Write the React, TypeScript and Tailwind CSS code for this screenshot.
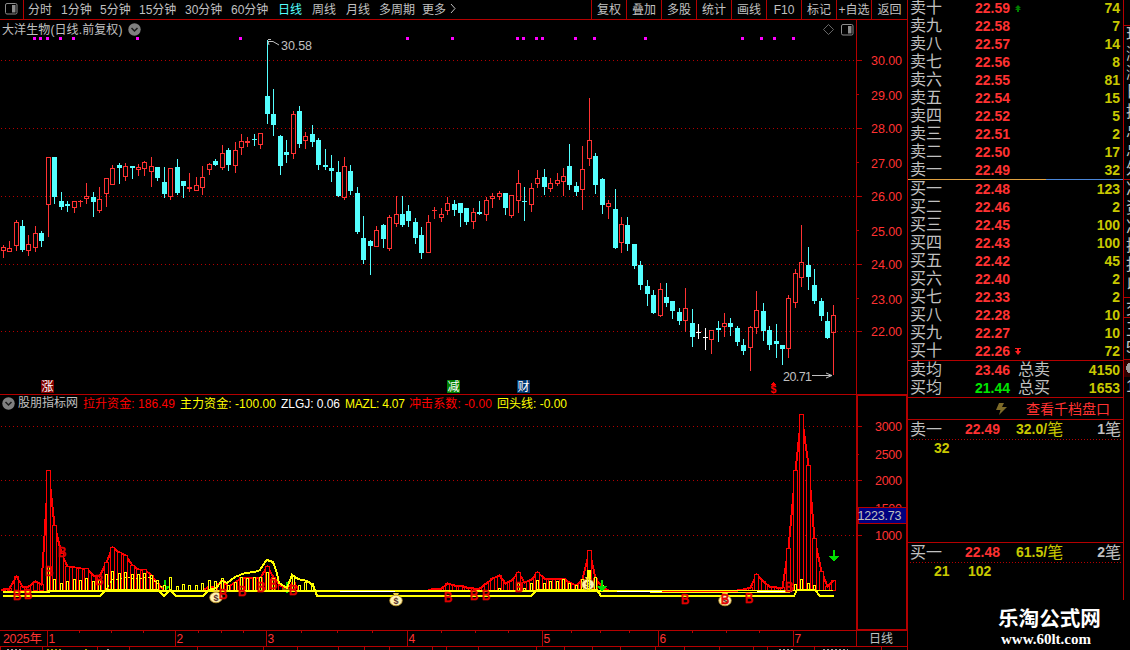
import { Fragment } from "react";

// [kind, high, body top, body bottom, low] in chart pixels
type Candle = [string, number, number, number, number];

const candles: Candle[] = [
  ["r", 245, 247, 250, 257], ["r", 241, 248, 251, 251], ["r", 220, 222, 245, 250], ["c", 220, 226, 250, 251],
  ["r", 235, 244, 250, 255], ["r", 226, 233, 247, 251], ["c", 231, 233, 241, 246], ["r", 157, 157, 204, 236],
  ["c", 157, 157, 197, 203], ["c", 192, 201, 207, 209], ["c", 201, 204, 206, 211], ["r", 201, 201, 207, 212],
  ["r", 200, 201, 201, 206], ["r", 183, 196, 198, 203], ["c", 192, 197, 202, 216], ["r", 187, 199, 210, 212],
  ["r", 178, 178, 193, 206], ["r", 165, 168, 184, 184], ["c", 163, 165, 168, 183], ["r", 163, 166, 176, 180],
  ["c", 166, 166, 168, 178], ["r", 164, 167, 169, 175], ["r", 161, 162, 168, 175], ["r", 157, 166, 171, 186],
  ["c", 167, 167, 178, 180], ["c", 167, 182, 194, 197], ["r", 168, 168, 196, 199], ["c", 159, 167, 193, 194],
  ["c", 181, 181, 186, 197], ["r", 173, 187, 188, 191], ["r", 177, 185, 190, 190], ["r", 166, 177, 187, 194],
  ["r", 163, 164, 169, 174], ["c", 159, 161, 165, 165], ["r", 145, 153, 167, 169], ["c", 148, 150, 165, 170],
  ["r", 142, 150, 165, 172], ["r", 134, 141, 147, 154], ["r", 137, 141, 142, 146], ["c", 134, 139, 139, 145],
  ["r", 133, 133, 144, 148], ["c", 40, 96, 114, 123], ["c", 89, 114, 125, 135], ["c", 135, 136, 166, 174],
  ["c", 140, 152, 155, 162], ["r", 111, 114, 153, 158], ["c", 106, 111, 144, 147], ["r", 132, 136, 140, 148],
  ["c", 125, 134, 142, 146], ["c", 138, 140, 165, 169], ["c", 149, 165, 167, 169], ["c", 155, 168, 171, 181],
  ["c", 161, 172, 196, 196], ["r", 157, 166, 197, 199], ["c", 165, 171, 191, 194], ["c", 187, 193, 232, 233],
  ["c", 216, 238, 260, 263], ["c", 240, 241, 246, 274], ["r", 226, 230, 246, 246], ["c", 224, 225, 239, 247],
  ["r", 215, 217, 248, 250], ["r", 196, 214, 223, 226], ["c", 196, 214, 225, 226], ["c", 205, 211, 221, 226],
  ["c", 218, 222, 238, 243], ["c", 227, 235, 253, 258], ["r", 215, 222, 252, 252], ["r", 207, 210, 210, 218],
  ["r", 208, 214, 217, 221], ["r", 197, 203, 210, 214], ["c", 200, 204, 210, 215], ["c", 203, 203, 213, 226],
  ["c", 208, 208, 222, 224], ["r", 208, 212, 221, 228], ["c", 201, 212, 214, 214], ["r", 197, 200, 214, 220],
  ["r", 193, 196, 198, 207], ["r", 191, 193, 196, 199], ["c", 193, 193, 208, 214], ["r", 195, 195, 215, 217],
  ["r", 170, 183, 200, 212], ["c", 187, 201, 201, 220], ["r", 183, 188, 204, 211], ["r", 170, 178, 183, 187],
  ["c", 169, 177, 187, 194], ["r", 178, 183, 188, 191], ["r", 173, 180, 183, 185], ["r", 168, 176, 181, 195],
  ["c", 144, 166, 185, 189], ["c", 182, 186, 192, 195], ["r", 146, 169, 189, 209], ["r", 98, 140, 158, 165],
  ["c", 153, 156, 185, 193], ["c", 178, 179, 205, 213], ["r", 200, 203, 206, 218], ["c", 189, 209, 248, 248],
  ["r", 217, 224, 242, 252], ["c", 217, 225, 244, 250], ["c", 244, 244, 266, 268], ["c", 261, 265, 285, 289],
  ["c", 280, 286, 294, 305], ["c", 290, 295, 313, 313], ["r", 283, 289, 315, 316], ["c", 283, 297, 303, 306],
  ["c", 301, 301, 311, 318], ["c", 308, 312, 321, 324], ["r", 288, 308, 320, 331], ["c", 309, 323, 337, 346],
  ["w", 324, 332, 332, 338], ["w", 328, 337, 337, 349], ["r", 330, 330, 339, 353], ["c", 321, 328, 330, 341],
  ["r", 313, 323, 326, 336], ["c", 318, 323, 327, 335], ["c", 326, 328, 342, 345], ["c", 339, 345, 351, 354],
  ["r", 326, 327, 347, 370], ["r", 291, 310, 327, 333], ["c", 303, 311, 331, 340], ["c", 326, 330, 345, 349],
  ["c", 324, 341, 344, 357], ["c", 345, 345, 349, 364], ["r", 295, 298, 348, 357], ["r", 269, 273, 302, 307],
  ["r", 225, 262, 277, 286], ["c", 247, 265, 277, 289], ["c", 269, 285, 301, 303], ["c", 298, 301, 316, 320],
  ["c", 312, 321, 338, 338], ["r", 305, 315, 332, 374],
];

const kindColors: Record<string, string> = { r: "#ff3232", c: "#54ffff", w: "#ffffff" };

const barX = (i: number) => Math.floor(3.2 + 6.44 * i);

// top of the red fund bars, by candle index
const redTops: Record<number, number> = {
  0: 589, 1: 588, 2: 576, 3: 586, 4: 586, 5: 581, 6: 584, 7: 470, 8: 525, 9: 553, 10: 566, 11: 567, 12: 568,
  13: 568, 14: 575, 15: 576, 16: 562, 17: 547, 18: 552, 19: 555, 20: 565, 21: 569, 22: 569, 23: 575, 24: 583,
  32: 586, 33: 586, 34: 580, 35: 586, 36: 582, 37: 577, 38: 577, 39: 577, 40: 577, 41: 566, 42: 577, 43: 585,
  44: 588, 45: 582, 67: 588, 68: 588, 69: 583, 70: 585, 71: 585, 72: 587, 73: 588, 74: 588, 75: 583, 76: 578,
  77: 575, 78: 583, 79: 580, 80: 572, 81: 582, 82: 579, 83: 572, 84: 578, 85: 578, 86: 578, 87: 578, 88: 582,
  89: 585, 90: 579, 91: 550, 92: 578, 93: 587, 115: 589, 116: 587, 117: 574, 118: 581, 119: 586, 120: 587,
  121: 587, 122: 548, 123: 470, 124: 414, 125: 465, 126: 538, 127: 571, 128: 586, 129: 580,
};

const yellowTops: Record<number, number> = {
  7: 566, 8: 579, 9: 583, 10: 581, 11: 579, 12: 580, 13: 578, 14: 581, 15: 580, 16: 574, 17: 571, 18: 573,
  19: 572, 20: 574, 21: 574, 22: 573, 23: 575, 24: 580, 25: 585, 26: 577, 27: 586, 28: 584, 29: 585, 30: 585,
  31: 583, 32: 580, 33: 581, 34: 578, 35: 585, 36: 582, 37: 577, 38: 578, 39: 577, 40: 577, 41: 572, 42: 578,
  45: 575, 46: 585, 47: 582, 48: 583, 77: 588, 80: 583, 81: 588, 82: 583, 83: 580, 84: 583, 85: 581, 86: 581,
  87: 579, 88: 583, 89: 585, 90: 579, 91: 570, 92: 577, 93: 585, 123: 584, 124: 579, 125: 583, 126: 585,
};

const redLine = candles.map((_, i) => `${barX(i) + 0.5},${(redTops[i] ?? 590) + 0.5}`).join(" ");

const dots = [33, 39, 46, 59, 72, 136, 239, 406, 451, 516, 522, 535, 541, 574, 593, 644, 741, 760, 773, 792];

const buyMarks = [
  [17, 594], [28, 593], [49, 570], [62, 551], [99, 579], [223, 593], [242, 590], [261, 586], [273, 583], [293, 589],
  [448, 596], [474, 594], [486, 594], [519, 586], [685, 598], [749, 597], [789, 586],
];

const periods = [
  ["分时", "w-[33px]"], ["1分钟", "w-[39px]"], ["5分钟", "w-[39px]"], ["15分钟", "w-[46px]"], ["30分钟", "w-[46px]"],
  ["60分钟", "w-[47px]"], ["日线", "w-[34px]"], ["周线", "w-[34px]"], ["月线", "w-[33px]"], ["多周期", "w-[43px]"],
  ["更多", "w-[27px]"],
];

const tools = ["复权", "叠加", "多股", "统计", "画线", "F10", "标记", "+自选", "返回"];

const indicators = [
  ["拉升资金: 186.49", "w-[97px] text-[#ff0000]", 92],
  ["主力资金: -100.00", "w-[101px] text-[#ffff00]", 96],
  ["ZLGJ: 0.06", "w-[64px] text-white", 59],
  ["MAZL: 4.07", "w-[64px] text-[#ffff00]", 60],
  ["冲击系数: -0.00", "w-[88px] text-[#ff0000]", 83],
  ["回头线: -0.00", "w-[80px] text-[#ffff00]", 70],
] as const;

const sells = [
  ["卖十", "22.59", "74"], ["卖九", "22.58", "7"], ["卖八", "22.57", "14"], ["卖七", "22.56", "8"], ["卖六", "22.55", "81"],
  ["卖五", "22.54", "15"], ["卖四", "22.52", "5"], ["卖三", "22.51", "2"], ["卖二", "22.50", "17"], ["卖一", "22.49", "32"],
];

const buys = [
  ["买一", "22.48", "123"], ["买二", "22.46", "2"], ["买三", "22.45", "100"], ["买四", "22.43", "100"], ["买五", "22.42", "45"],
  ["买六", "22.40", "2"], ["买七", "22.33", "2"], ["买八", "22.28", "10"], ["买九", "22.27", "10"], ["买十", "22.26", "72"],
];

const priceAxis = [
  ["30.00", 60, 60], ["29.00", 94, 95], ["28.00", 128, 128], ["27.00", 162, 163], ["26.00", 196, 196],
  ["25.00", 230, 231], ["24.00", 264, 264], ["23.00", 298, 299], ["22.00", 331, 331],
] as const;

const months = [[47, "1"], [175, "2"], [266, "3"], [407, "4"], [542, "5"], [658, "6"], [793, "7"]] as const;
const minorTicks = [79, 111, 143, 198, 221, 243, 301, 337, 372, 441, 475, 508, 571, 600, 629, 692, 726, 759];
const footTicks = [0, 42, 97, 129, 197, 263, 297, 338, 364, 389, 432, 446, 478, 536, 564, 592, 620, 655, 684, 719, 753, 767, 814, 881];

const sideChars = [
  ["现", 34], ["涨", 53], ["涨", 72], ["日", 91], ["换", 111], ["总", 130], ["总", 149], ["外", 168], ["净", 188],
  ["资", 207], ["净", 226], ["换", 245], ["报", 264], ["以", 284], ["交", 308], ["王", 329], ["5", 347], ["1", 386],
] as const;

function Chevron() {
  return (
    <svg width="13" height="13" viewBox="0 0 13 13" className="shrink-0">
      <circle cx="6.5" cy="6.5" r="6.2" fill="#808080" />
      <path d="M3.5 5 6.5 8 9.5 5" fill="none" stroke="#1a1a1a" strokeWidth="1.5" />
    </svg>
  );
}

function PanelIcon() {
  return (
    <svg width="13" height="12" viewBox="0 0 13 12" className="shrink-0">
      <rect x="0.5" y="0.5" width="11.5" height="10.5" rx="1.5" fill="none" stroke="#8c8c8c" />
      <rect x="7" y="2" width="3.5" height="7.5" fill="#8c8c8c" />
    </svg>
  );
}

function DottedLine({ y }: { y: number }) {
  return <line x1="1" x2="856" y1={y + 0.5} y2={y + 0.5} stroke="#b40000" strokeDasharray="1 3" />;
}

function CandleShape({ x, data }: { x: number; data: Candle }) {
  const [kind, high, top, bottom, low] = data;
  const color = kindColors[kind];
  if (bottom - top < 2) {
    return (
      <g fill={color}>
        <rect x={x} y={high} width="1" height={low - high + 1} />
        <rect x={x - 2} y={top} width="5" height={bottom - top + 1} />
      </g>
    );
  }
  if (kind === "r") {
    return (
      <g fill={color}>
        <rect x={x} y={high} width="1" height={top - high} />
        <rect x={x} y={bottom} width="1" height={low - bottom + 1} />
        <rect x={x - 1.5} y={top + 0.5} width="4" height={bottom - top} fill="none" stroke={color} />
      </g>
    );
  }
  return (
    <g fill={color}>
      <rect x={x} y={high} width="1" height={low - high + 1} />
      <rect x={x - 2} y={top} width="5" height={bottom - top} />
    </g>
  );
}

function Stamp({ x, text, fill }: { x: number; text: string; fill: string }) {
  return (
    <g>
      <rect x={x} y="380" width="13" height="13" fill={fill} />
      <text x={x + 0.5} y="391" fontSize="12" fill="#ffffff">{text}</text>
    </g>
  );
}

function PriceChart() {
  return (
    <svg width="907" height="357" viewBox="0 37 907 357" shapeRendering="crispEdges" className="block">
      {[60, 128, 196, 264, 331].map((y) => <DottedLine key={y} y={y} />)}
      {dots.map((x) => <rect key={x} x={x} y="37" width="3" height="3" fill="#ff00ff" />)}
      {candles.map((c, i) => <CandleShape key={i} x={barX(i)} data={c} />)}

      <g stroke="#c0c0c0" fill="none" shapeRendering="auto">
        <path d="M268 41.5 273 41.5 279 45M268 41 269 45M268 39.5H271" />
        <path d="M812 375.5H832M826 373 832 375.5 826 378" />
      </g>
      <text x="281" y="50" fontSize="12.5" fill="#c0c0c0" textLength="31">30.58</text>
      <text x="783" y="381" fontSize="12.5" fill="#c0c0c0" textLength="29">20.71</text>

      <Stamp x={41} text="涨" fill="#800000" />
      <Stamp x={447} text="减" fill="#008000" />
      <Stamp x={517} text="财" fill="#003870" />
      <path d="M771 385 773.5 382 776 385Z" fill="#ff0000" />
      <text x="770.5" y="393" fontSize="10.5" fontWeight="bold" fill="#ff0000">$</text>

      <rect x="856" y="37" width="1" height="357" fill="#b40000" />
      {priceAxis.map(([label, tick, y], i) => (
        <Fragment key={label}>
          <rect x="857" y={tick} width={i % 2 ? 2 : 5} height="1" fill="#b40000" />
          <text x="871" y={y + 5} fontSize="12.5" fill="#ff3232" textLength="31">{label}</text>
        </Fragment>
      ))}
    </svg>
  );
}

function MoneyBag({ x, y }: { x: number; y: number }) {
  return (
    <g shapeRendering="auto">
      <path d={`M${x - 3} ${y - 7}h6l-1.5 3h-3z`} fill="#f5d742" />
      <ellipse cx={x} cy={y + 0.5} rx="6.3" ry="5.3" fill="#fff3b0" stroke="#b88a20" strokeWidth="0.8" />
      <text x={x} y={y + 4} fontSize="9" fontWeight="bold" textAnchor="middle" fill="#5a3030">$</text>
    </g>
  );
}

function DownArrow({ x, y }: { x: number; y: number }) {
  return <path d={`M${x - 1} ${y}h2v6h4l-5 6-5-6h4z`} fill="#00e000" />;
}

function FundChart() {
  return (
    <svg width="907" height="218" viewBox="0 412 907 218" shapeRendering="crispEdges" className="block">
      {[426, 480, 535].map((y) => <DottedLine key={y} y={y} />)}
      <DownArrow x={165} y={580} />
      <DownArrow x={287} y={582} />
      <g fill="none" stroke="#ff0000">
        <polyline points={redLine} strokeWidth="2" />
        {Object.entries(redTops).map(([i, y]) => (
          <rect key={i} x={barX(Number(i)) - 1.5} y={y + 0.5} width="4" height={590 - y} fill={y < 575 ? "#000000" : "none"} />
        ))}
      </g>
      <g fill="#000000" stroke="#ffff00">
        {Object.entries(yellowTops).map(([i, y]) => (
          <rect key={i} x={barX(Number(i)) - 0.5} y={y + 0.5} width="2" height={590 - y} />
        ))}
      </g>
      <g fill="none" stroke="#ffff00">
        <polyline points="3,591.5 50,591.5" strokeWidth="2" />
        <polyline points="50,591 600,591" strokeWidth="2" />
        <polyline points="600,590.5 833,590.5" />
        <polyline points="600,591.5 700,592.5 790,592.5" />
        <polyline points="106,590 112,580 119,579 125,577 131,578 138,579 150,577 157,583 164,589" strokeDasharray="2 2" />
        <polyline
          strokeWidth="2"
          points="3,596 100,596 106,590 158,590 164,596 170,590 176,596 203,596 209,590 216,588 222,581 227,583 235,577 240,575 245,573 255,572 260,570 263,565 267,560 273,562 277,573 279,583 287,588 292,575 298,579 307,581 313,585 317,596 531,596 537,590 597,590 601,596 794,596 797,590 815,590 820,596 834,596"
        />
      </g>
      <path d="M340 591.5H395M617 591.5H662M757 591.5H792" stroke="#ffffff" />
      <MoneyBag x={216} y={597} />
      <MoneyBag x={396} y={600} />
      <MoneyBag x={588} y={584} />
      <MoneyBag x={725} y={600} />
      <rect x="587.5" y="570.5" width="2" height="19" fill="none" stroke="#ffff00" />
      {[...buyMarks, [725, 598]].map(([x, y]) => (
        <text key={`${x}-${y}`} x={x} y={y + 5.5} fontSize="15" textAnchor="middle" fill="#e60000" stroke="#e60000" strokeWidth="0.7" textLength="8.5" lengthAdjust="spacingAndGlyphs">
          B
        </text>
      ))}
      <DownArrow x={602} y={580} />
      <DownArrow x={834} y={550} />

      <rect x="856" y="412" width="2" height="218" fill="#b40000" />
      <rect x="906" y="412" width="1" height="218" fill="#b40000" />
      <rect x="857" y="629" width="50" height="1" fill="#b40000" />
      {[["3000", 426], ["2500", 454], ["2000", 480], ["1500", 508], ["1000", 535]].map(([label, y], i) => (
        <Fragment key={label}>
          <rect x="858" y={y} width={i % 2 ? 1 : 4} height="1" fill="#b40000" />
          <text x="875" y={Number(y) + 5} fontSize="12.5" fill="#ff3232" textLength="27">{label}</text>
        </Fragment>
      ))}
      <rect x="858" y="507.5" width="48" height="16" fill="#000080" stroke="#b40000" />
      <text x="857.5" y="519.5" fontSize="12.5" fill="#c0c0c0" textLength="44">1223.73</text>
    </svg>
  );
}

function TimeAxis() {
  return (
    <svg width="907" height="20" viewBox="0 630 907 20" shapeRendering="crispEdges" className="block">
      <g fill="#b40000">
        <rect x="0" y="630" width="907" height="1" />
        <rect x="0" y="646" width="907" height="1" />
        <rect x="856" y="630" width="1" height="16" />
        {minorTicks.map((x) => <rect key={x} x={x} y="631" width="1" height="2" />)}
        {months.map(([x]) => <rect key={x} x={x} y="631" width="1" height="15" />)}
        {footTicks.map((x) => <rect key={x} x={x} y="647" width="1" height="3" />)}
      </g>
      <text x="3" y="643" fontSize="12.5" fill="#ff3232" textLength="39">2025年</text>
      {months.map(([x, label]) => <text key={label} x={x + 1.5} y="643" fontSize="12" fill="#ff3232">{label}</text>)}
      <text x="869" y="643" fontSize="12" fill="#c0c0c0">日线</text>
      <path d="M7 649.5H22M107 649.5H109M779 649.5H795M823 649.5H848" stroke="#a0a0a0" strokeDasharray="2 2" />
      <path d="M47 649.5H61M85 649.5H88" stroke="#a0a000" strokeDasharray="2 2" />
    </svg>
  );
}

function QuoteRow({ row }: { row: string[] }) {
  const [label, price, volume] = row;
  return (
    <div className="flex h-[18px] items-center pl-0.5 pr-[3px]">
      <span className="w-[65px] text-base leading-[18px] text-[#c0c0c0]">{label}</span>
      <span className="w-10 text-sm font-bold leading-[18px] text-[#ff3232]">{price}</span>
      {price === "22.59" && (
        <svg width="6" height="7" viewBox="0 0 6 7"><path d="M3 0 6 3H0ZM3 2 6 5H4V7H2V5H0Z" fill="#008000" /></svg>
      )}
      {price === "22.26" && (
        <svg width="6" height="7" viewBox="0 0 6 7"><path d="M0 0H6V1H4V3H6L3 7 0 3H2V1H0Z" fill="#ff2020" /></svg>
      )}
      <span className="ml-auto text-sm font-bold leading-[18px] text-[#c8c800]">{volume}</span>
    </div>
  );
}

function AverageRow({ label, price, total, volume, green }: { label: string; price: string; total: string; volume: string; green?: boolean }) {
  return (
    <div className="flex h-[18px] items-center pl-0.5 pr-[3px]">
      <span className="w-[65px] text-base leading-[18px] text-[#c0c0c0]">{label}</span>
      <span className={`w-[43px] text-sm font-bold ${green ? "text-[#00e600]" : "text-[#ff3232]"}`}>{price}</span>
      <span className="text-base leading-[18px] text-[#c0c0c0]">{total}</span>
      <span className="ml-auto text-sm font-bold text-[#c8c800]">{volume}</span>
    </div>
  );
}

function QueueHead({ label, price, average, count }: { label: string; price: string; average: string; count: string }) {
  return (
    <div className="flex h-[19px] items-center pl-0.5 pr-[2px] text-base leading-[18px]">
      <span className="w-[55px] text-[#c0c0c0]">{label}</span>
      <span className="w-[51px] pb-px text-sm font-bold text-[#ff3232]">{price}</span>
      <span className="flex items-center text-[#c8c800]"><b className="pb-px text-sm">{average}/</b>笔</span>
      <span className="ml-auto flex items-center text-[#c0c0c0]"><b className="pb-px text-sm">{count}</b>笔</span>
    </div>
  );
}

function DotRule() {
  return (
    <svg width="215" height="1" className="block">
      <line x1="2" x2="213" y1="0.5" y2="0.5" stroke="#b40000" strokeDasharray="1 2" shapeRendering="crispEdges" />
    </svg>
  );
}

export default function App() {
  return (
    <div className="flex h-[650px] w-[1130px] overflow-hidden whitespace-nowrap bg-black font-['Liberation_Sans','Noto_Sans_CJK_SC',sans-serif]">
      <div className="flex w-[908px] shrink-0 flex-col border-r border-[#b40000] text-xs text-[#c0c0c0]">
        {/* Toolbar */}
        <div className="flex h-5 shrink-0 items-stretch border-b border-[#b40000] leading-5">
          <div className="flex w-6 items-center border-r border-[#b40000] pb-0.5 pl-[5px]"><PanelIcon /></div>
          <div className="flex pl-1">
            {periods.map(([name, width]) => (
              <span key={name} className={`${width} shrink-0 ${name === "日线" ? "text-[#54ffff]" : ""}`}>{name}</span>
            ))}
            <svg width="8" height="18" viewBox="0 0 8 18"><path d="M2 4 6 8.5 2 13" fill="none" stroke="#c0c0c0" /></svg>
          </div>
          <div className="ml-auto flex">
            {tools.map((name) => (
              <span key={name} className="h-[19px] w-[35px] border-l border-[#b40000] text-center last:w-9">{name}</span>
            ))}
          </div>
        </div>

        {/* Price pane */}
        <div className="flex h-[17px] w-[857px] shrink-0 items-center border-r border-[#b40000] pl-0.5 pr-[2px] pt-0.5">
          <span className="mr-1.5 w-[120px] leading-4 tracking-[0.1px]">大洋生物(日线.前复权)</span>
          <Chevron />
          <svg width="11" height="11" viewBox="0 0 11 11" className="ml-auto mr-[7px]">
            <path d="M5.5 0.5 10.5 5.5 5.5 10.5 0.5 5.5Z" fill="none" stroke="#808080" strokeWidth="0.8" />
          </svg>
          <PanelIcon />
        </div>
        <PriceChart />

        {/* Fund indicator pane */}
        <div className="flex h-[18px] shrink-0 border-t border-[#b40000]">
          <div className="flex flex-1 items-center pb-px pl-[2px]">
            <Chevron />
            <span className="ml-[3px] w-[65px] leading-4">股朋指标网</span>
            {indicators.map(([name, cls, length]) => (
              <span key={name} className={`${cls} shrink-0`}>
                <svg width={length} height="16" className="block overflow-visible">
                  <text x="0" y="12.5" fontSize="12" fill="currentColor" textLength={length}>{name}</text>
                </svg>
              </span>
            ))}
          </div>
          <div className="w-[51px] border-l-2 border-r border-t border-[#b40000]" />
        </div>
        <FundChart />
        <TimeAxis />
      </div>

      {/* Order book */}
      <div className="flex w-[215px] shrink-0 flex-col">
        <div className="-mt-px h-[180px] shrink-0">
          {sells.map((row) => <QuoteRow key={row[0]} row={row} />)}
        </div>
        <div className="flex h-px shrink-0"><i className="w-[138px] bg-[#e0a040]" /><i className="flex-1 bg-[#4a86d8]" /></div>
        <div className="h-[180px] shrink-0">
          {buys.map((row) => <QuoteRow key={row[0]} row={row} />)}
        </div>
        <div className="h-[37px] shrink-0 border-t border-[#b40000]">
          <AverageRow label="卖均" price="23.46" total="总卖" volume="4150" />
          <AverageRow label="买均" price="21.44" total="总买" volume="1653" green />
        </div>
        <div className="flex h-[22px] shrink-0 items-center border-t border-[#b40000] pl-[87px] text-sm leading-5 text-[#ff3232]">
          <svg width="12" height="12" viewBox="0 0 12 12" className="mr-[19px]"><path d="M4 0H9L7 4H12L4 12 5.5 7H1Z" fill="#7d6a28" /></svg>
          查看千档盘口
        </div>
        <div className="h-[123px] shrink-0 border-t border-[#b40000]">
          <QueueHead label="卖一" price="22.49" average="32.0" count="1" />
          <DotRule />
          <div className="pl-[26px] text-sm font-bold leading-[17px] text-[#c8c800]">32</div>
        </div>
        <div className="h-[58px] shrink-0 border-t border-[#b40000]">
          <QueueHead label="买一" price="22.48" average="61.5" count="2" />
          <DotRule />
          <div className="flex pl-[26px] text-sm font-bold leading-[17px] text-[#c8c800]"><span className="w-[34px]">21</span>102</div>
        </div>
        <div className="flex flex-1 flex-col pl-[90px] pt-2 text-white">
          <div className="text-[20.6px] font-bold leading-[22px]">乐淘公式网</div>
          <div className="pl-[3px] font-['Liberation_Serif',serif] text-[15px] font-bold leading-[18px]">www.60lt.com</div>
        </div>
      </div>

      {/* Cut-off edge of the next panel */}
      <svg width="7" height="650" viewBox="1123 0 7 650" className="block shrink-0" shapeRendering="crispEdges">
        <rect x="1124" y="360" width="6" height="17" fill="#300000" />
        <g fill="#b40000">
          <rect x="1123" y="0" width="1" height="600" />
          {[25, 179, 297, 317, 359].map((y) => <rect key={y} x="1124" y={y} width="6" height="1" />)}
        </g>
        {sideChars.map(([char, y]) => (
          <text key={y} x="1126" y={y + 6} fontSize="16" fill="#c0c0c0">{char}</text>
        ))}
        <circle cx="1132" cy="368" r="6" fill="#a0a0a0" />
      </svg>
    </div>
  );
}
